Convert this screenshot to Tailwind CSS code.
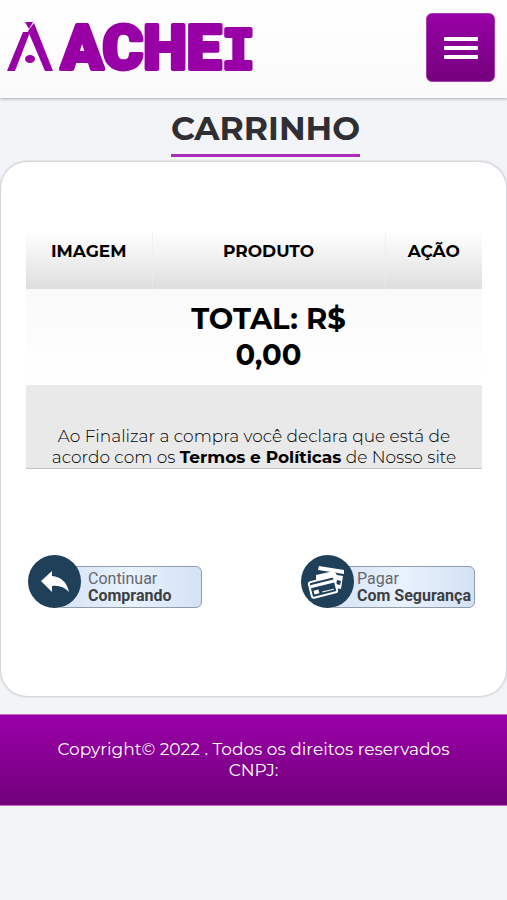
<!doctype html>
<html lang="pt-BR">
  <head>
    <meta charset="UTF-8" />
    <meta name="viewport" content="width=device-width, initial-scale=1.0" />
    <title>Carrinho - Achei</title>
    <script src="https://cdn.jsdelivr.net/npm/@tailwindcss/browser@4"></script>
  </head>
  <body class="min-h-screen bg-[#f2f4f8] font-[Montserrat,Inter,sans-serif] text-[17px] leading-[21px] text-black">
    <header class="flex h-[98px] items-start justify-between bg-linear-to-b from-white to-[#fafafa] pr-3 pl-[7px] shadow-[0_1px_3px_rgba(0,0,0,0.3)]">
      <a href="#" aria-label="Achei">
        <svg class="h-[92px] w-[260px]" viewBox="0 0 260 92" fill="#9800a6">
          <path d="M18 22h8l-4 7z" />
          <path d="M16 32h7L8 71H0z" />
          <path d="M21 31l6-8 19 48h-8z" />
          <ellipse cx="23" cy="59" rx="5" ry="4" />
          <text x="54" y="69" font-family="Roboto, sans-serif" font-size="62" font-weight="900" stroke="#9800a6" stroke-width="4" stroke-linejoin="round">ACHE<tspan font-family="DejaVu Sans Mono, monospace" font-size="56" font-weight="700">I</tspan></text>
        </svg>
      </a>
      <button type="button" aria-label="Menu" class="mt-[13px] flex size-[69px] items-center justify-center rounded-md border border-[#a43bae] bg-linear-to-b from-[#9800a6] to-[#75007e]">
        <svg class="h-[22px] w-[34px]" viewBox="0 0 34 22" fill="#fff">
          <rect y="0" width="34" height="4" rx="1" />
          <rect y="9" width="34" height="4" rx="1" />
          <rect y="18" width="34" height="4" rx="1" />
        </svg>
      </button>
    </header>

    <main>
      <div class="flex justify-center pt-3 pl-6">
        <h1 class="border-b-3 border-[#ab2cb8] pb-2 text-[33px] leading-9 font-bold text-[#2f2f33]">CARRINHO</h1>
      </div>

      <section class="mx-px mt-[5px] rounded-[26px] bg-white pt-[70px] pr-6 pb-[88px] pl-[25px] shadow-[0_0_3px_rgba(0,0,0,0.35)]">
        <table class="w-full table-fixed text-center">
          <colgroup>
            <col class="w-[126px]" />
            <col />
            <col class="w-[97px]" />
          </colgroup>
          <thead>
            <tr class="h-[57px] bg-linear-to-b from-white to-[#dedede]">
              <th class="pt-[9px] align-top font-bold">IMAGEM</th>
              <th class="border-x border-[#ececec]/60 pt-[9px] align-top font-bold">PRODUTO</th>
              <th class="pt-[9px] align-top font-bold">AÇÃO</th>
            </tr>
          </thead>
          <tbody>
            <tr class="h-24 bg-linear-to-b from-[#fafafa] to-white">
              <td></td>
              <td class="px-8 text-[29px] leading-9 font-bold">TOTAL: R$ 0,00</td>
              <td></td>
            </tr>
            <tr class="border-b border-[#c4c4c4] bg-[#e9e9e9]">
              <td colspan="3" class="px-5 pt-[41px] font-light">
                Ao Finalizar a compra você declara que está de acordo com os
                <a href="#" class="font-bold">Termos e Políticas</a> de Nosso site
              </td>
            </tr>
          </tbody>
        </table>

        <div class="mt-[86px] flex justify-between pr-[7px] pl-[2px] font-[Roboto,sans-serif] text-[16px] leading-[17px]">
          <a href="#" class="flex w-[174px] items-end">
            <span class="z-10 flex size-[53px] shrink-0 items-center justify-center rounded-full bg-[#203f58]">
              <svg class="h-6 w-7" viewBox="0 0 28 24" fill="#fff">
                <path d="M0 11L11 1v5c9 1 15 6 17 16-5-5-10-7-17-6v6z" />
              </svg>
            </span>
            <span class="-ml-6 flex h-[42px] grow flex-col justify-center rounded-md border border-[#929baa] bg-linear-to-r from-[#d5e3f5] via-[#e9f2fd] to-[#d3e2f5] pl-[30px] text-left whitespace-nowrap text-[#66686d]">
              Continuar
              <strong class="text-[#3d3f44]">Comprando</strong>
            </span>
          </a>
          <button type="button" class="flex w-[174px] items-end">
            <span class="z-10 flex size-[53px] shrink-0 items-center justify-center rounded-full bg-[#203f58]">
              <svg class="h-9 w-[42px]" viewBox="0 0 42 36" fill="#fff">
                <path d="M12 2l25 4v4L11 6z" />
                <path d="M9 11l18-4 3 4 6 1-2 13-6-1-3-10-16 2z" />
                <path d="M30 16l4 1-1 4-4-1z" fill="#203f58" />
                <g transform="rotate(-14 17 23)">
                  <rect x="3" y="15" width="26" height="16" rx="2" fill="#203f58" stroke="#fff" stroke-width="2" />
                  <rect x="3" y="18" width="26" height="3" />
                  <rect x="6" y="24" width="5" height="4" />
                  <rect x="14" y="27" width="12" height="1" />
                </g>
              </svg>
            </span>
            <span class="-ml-6 flex h-[42px] grow flex-col justify-center rounded-md border border-[#929baa] bg-linear-to-r from-[#d5e3f5] via-[#e9f2fd] to-[#d3e2f5] pl-[26px] text-left whitespace-nowrap text-[#66686d]">
              Pagar
              <strong class="text-[#3d3f44]">Com Segurança</strong>
            </span>
          </button>
        </div>
      </section>
    </main>

    <footer class="mt-[18px] border-y border-[#c46bcc] bg-linear-to-b from-[#9b00a9] to-[#71007a] px-12 py-6 text-center text-white">
      <p>Copyright© 2022 . Todos os direitos reservados</p>
      <p>CNPJ:</p>
    </footer>
  </body>
</html>
